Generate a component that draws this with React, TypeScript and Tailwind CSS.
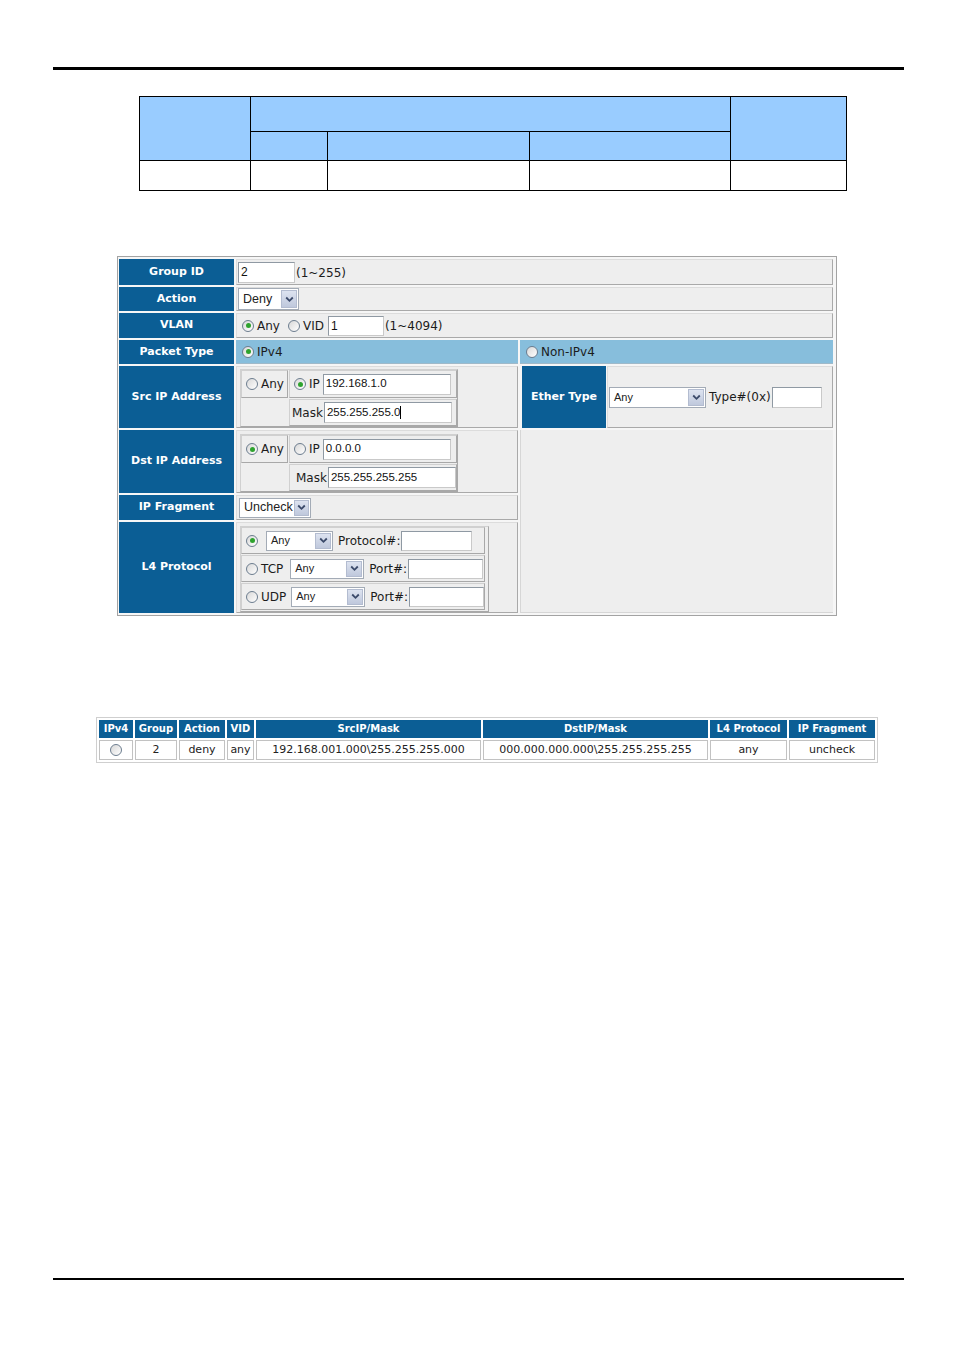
import React from "react";

const F = "font-['DejaVu_Sans',Verdana,sans-serif]";
const A = "font-['Liberation_Sans',Arial,sans-serif]";
const LBL = `${F} bg-[#0b5e95] text-white font-bold text-[11px] flex items-center justify-center`;
const CELL = "bg-[#eeeeee] border border-[#dcdcdc] border-b-[#a9a9a9] border-r-[#a9a9a9] flex items-center";
const BOX = "border border-[#d0d0d0] border-b-[#a8a8a8] border-r-[#a8a8a8]";
const TXT = `${F} text-[12px] text-[#1c1c1c] leading-none whitespace-nowrap`;

function Radio({ checked }: { checked?: boolean }) {
  return (
    <span className="inline-flex w-[12px] h-[12px] shrink-0 rounded-full border border-[#6c7d8f] bg-linear-to-br from-[#d8d8d8] to-white items-center justify-center">
      {checked && <span className="w-[5px] h-[5px] rounded-full bg-[#2ea32e]" />}
    </span>
  );
}

function Chevron() {
  return (
    <svg width="9" height="7" viewBox="0 0 9 7">
      <path d="M1.2 1.5 L4.5 4.8 L7.8 1.5" stroke="#3b4a6a" strokeWidth="1.8" fill="none" />
    </svg>
  );
}

function Sel({ cls, text, small }: { cls: string; text: string; small?: boolean }) {
  return (
    <div className={`flex shrink-0 bg-white border border-[#a3abb6] items-stretch ${cls}`}>
      <span
        className={`flex-1 flex items-center pl-[4px] ${A} ${small ? "text-[11px]" : "text-[12.5px]"} text-[#222] leading-none whitespace-nowrap`}
      >
        {text}
      </span>
      <span className="w-[16px] m-[1px] bg-linear-to-b from-[#dde3f0] to-[#bfc8dc] border border-[#b3bcd0] flex items-center justify-center">
        <Chevron />
      </span>
    </div>
  );
}

function Inp({ cls, value, cursor }: { cls: string; value?: string; cursor?: boolean }) {
  return (
    <div
      className={`flex shrink-0 items-center bg-white border border-[#8f99a3] border-b-[#c9c9c9] border-r-[#c9c9c9] pl-[2px] ${A} text-[11.5px] text-[#111] leading-none whitespace-nowrap ${cls}`}
    >
      {value}
      {cursor && <span className="inline-block w-[1px] h-[13px] bg-black" />}
    </div>
  );
}

function IpBox({ any, ip, mask, cursor, maskPad }: { any: boolean; ip: string; mask: string; cursor?: boolean; maskPad: string }) {
  return (
    <div className={`${BOX} w-[218px] h-[58px] grid grid-cols-[47px_168px] grid-rows-[28px_27px] gap-[1px]`}>
      <div className={`${BOX} flex items-center pl-[4px]`}>
        <Radio checked={any} />
        <span className={`${TXT} ml-[3px]`}>Any</span>
      </div>
      <div className={`${BOX} flex items-center pl-[4px]`}>
        <Radio checked={!any} />
        <span className={`${TXT} ml-[3px]`}>IP</span>
        <Inp cls="ml-[3px] w-[128px] h-[21px]" value={ip} />
      </div>
      <div />
      <div className={`${BOX} flex items-center ${maskPad}`}>
        <span className={TXT}>Mask</span>
        <Inp cls="ml-[1px] w-[128px] h-[21px]" value={mask} cursor={cursor} />
      </div>
    </div>
  );
}

const heads = [
  ["IPv4", "w-[34px]"],
  ["Group", "w-[42px]"],
  ["Action", "w-[46px]"],
  ["VID", "w-[27px]"],
  ["SrcIP/Mask", "w-[225px]"],
  ["DstIP/Mask", "w-[225px]"],
  ["L4 Protocol", "w-[77px]"],
  ["IP Fragment", "w-[86px]"],
];
const row = ["", "2", "deny", "any", "192.168.001.000\\255.255.255.000", "000.000.000.000\\255.255.255.255", "any", "uncheck"];

export default function App() {
  return (
    <div className="w-[954px] h-[1350px] bg-white overflow-hidden pt-[67px]">
      <div className="ml-[53px] w-[851px] h-[3px] bg-black" />

      {/* top table */}
      <div className="ml-[139px] mt-[26px] w-[708px] grid grid-cols-[110px_76px_201px_200px_115px] grid-rows-[34px_28px_29px] gap-[1px] bg-black p-[1px]">
        <div className="row-span-2 bg-[#99ccff]" />
        <div className="col-span-3 bg-[#99ccff]" />
        <div className="row-span-2 bg-[#99ccff]" />
        <div className="bg-[#99ccff]" />
        <div className="bg-[#99ccff]" />
        <div className="bg-[#99ccff]" />
        <div className="bg-white" />
        <div className="bg-white" />
        <div className="bg-white" />
        <div className="bg-white" />
        <div className="bg-white" />
      </div>

      {/* form */}
      <div className="ml-[117px] mt-[65px] w-[720px] h-[360px] bg-[#f6f6f6] border border-[#a3a3a3] pt-[2px] pb-[2px] pl-[1px] pr-[3px] grid grid-cols-[115px_282px_313px] grid-rows-[26px_24px_25px_24px_62px_63px_25px_91px] gap-[2px]">
        <div className={LBL}>Group ID</div>
        <div className={`${CELL} col-span-2 pl-[1px]`}>
          <Inp cls="w-[57px] h-[21px] text-[12px]" value="2" />
          <span className={`${TXT} ml-[1px] pt-[2px]`}>(1~255)</span>
        </div>

        <div className={LBL}>Action</div>
        <div className={`${CELL} col-span-2 pl-[1px]`}>
          <Sel cls="w-[61px] h-[22px]" text="Deny" />
        </div>

        <div className={LBL}>VLAN</div>
        <div className={`${CELL} col-span-2 pl-[5px]`}>
          <Radio checked />
          <span className={`${TXT} ml-[3px]`}>Any</span>
          <span className="ml-[8px]">
            <Radio />
          </span>
          <span className={`${TXT} ml-[3px]`}>VID</span>
          <Inp cls="ml-[4px] w-[56px] h-[20px] text-[12px]" value="1" />
          <span className={`${TXT} ml-[1px]`}>(1~4094)</span>
        </div>

        <div className={LBL}>Packet Type</div>
        <div className="bg-[#87bedc] flex items-center pl-[6px] border-b border-[#9fb9c9]">
          <Radio checked />
          <span className={`${TXT} ml-[3px]`}>IPv4</span>
        </div>
        <div className="bg-[#87bedc] flex items-center pl-[6px] border-b border-[#9fb9c9]">
          <Radio />
          <span className={`${TXT} ml-[3px]`}>Non-IPv4</span>
        </div>

        <div className={LBL}>Src IP Address</div>
        <div className={`${CELL} items-start pt-[2px] pl-[3px]`}>
          <IpBox any={false} ip="192.168.1.0" mask="255.255.255.0" cursor maskPad="pl-[2px]" />
        </div>
        <div className="flex gap-[1px] pl-[2px]">
          <div className={`${LBL} w-[84px]`}>Ether Type</div>
          <div className={`${CELL} flex-1 pl-[1px]`}>
            <Sel cls="w-[97px] h-[21px]" text="Any" small />
            <span className={`${TXT} ml-[3px]`}>Type#(0x)</span>
            <Inp cls="ml-[1px] w-[50px] h-[21px]" />
          </div>
        </div>

        <div className={LBL}>Dst IP Address</div>
        <div className={`${CELL} items-start pt-[3px] pl-[3px]`}>
          <IpBox any ip="0.0.0.0" mask="255.255.255.255" maskPad="pl-[6px]" />
        </div>
        <div className="row-span-3 bg-[#eeeeee] border-l border-[#d6d6d6] border-b border-[#b8b8b8]" />

        <div className={LBL}>IP Fragment</div>
        <div className={`${CELL} pl-[2px]`}>
          <Sel cls="w-[72px] h-[20px]" text="Uncheck" />
        </div>

        <div className={LBL}>L4 Protocol</div>
        <div className={`${CELL} items-start pt-[3px] pl-[3px]`}>
          <div className={`${BOX} w-[249px] h-[86px] pr-[3px] flex flex-col gap-[1px]`}>
            <div className={`${BOX} h-[27px] flex items-center pl-[4px]`}>
              <Radio checked />
              <Sel cls="ml-[8px] w-[67px] h-[20px]" text="Any" small />
              <span className={`${TXT} ml-[5px]`}>Protocol#:</span>
              <Inp cls="ml-[1px] w-[71px] h-[20px]" />
            </div>
            <div className={`${BOX} h-[27px] flex items-center pl-[4px]`}>
              <Radio />
              <span className={`${TXT} ml-[3px]`}>TCP</span>
              <Sel cls="ml-[7px] w-[74px] h-[20px]" text="Any" small />
              <span className={`${TXT} ml-[5px]`}>Port#:</span>
              <Inp cls="ml-[1px] w-[75px] h-[20px]" />
            </div>
            <div className={`${BOX} h-[27px] flex items-center pl-[4px]`}>
              <Radio />
              <span className={`${TXT} ml-[3px]`}>UDP</span>
              <Sel cls="ml-[5px] w-[74px] h-[20px]" text="Any" small />
              <span className={`${TXT} ml-[5px]`}>Port#:</span>
              <Inp cls="ml-[1px] w-[75px] h-[20px]" />
            </div>
          </div>
        </div>
      </div>

      {/* bottom table */}
      <table className="ml-[96px] mt-[101px] w-[782px] table-fixed border-separate border-spacing-[2px] border border-[#cfcfcf] bg-white">
        <thead>
          <tr>
            {heads.map(([h, w]) => (
              <th
                key={h}
                className={`${w} h-[18px] p-0 bg-[#0b5e95] text-white font-bold text-[10px] leading-none text-center ${F} whitespace-nowrap`}
              >
                {h}
              </th>
            ))}
          </tr>
        </thead>
        <tbody>
          <tr>
            {row.map((c, i) => (
              <td
                key={i}
                className={`h-[20px] p-0 pb-[1px] border border-[#c2c2c2] bg-white text-center text-[11px] text-[#222] leading-none ${F} whitespace-nowrap`}
              >
                {i === 0 ? (
                  <span className="inline-flex align-middle">
                    <Radio />
                  </span>
                ) : (
                  c
                )}
              </td>
            ))}
          </tr>
        </tbody>
      </table>

      <div className="ml-[53px] mt-[515px] w-[851px] h-[2px] bg-black" />
    </div>
  );
}
